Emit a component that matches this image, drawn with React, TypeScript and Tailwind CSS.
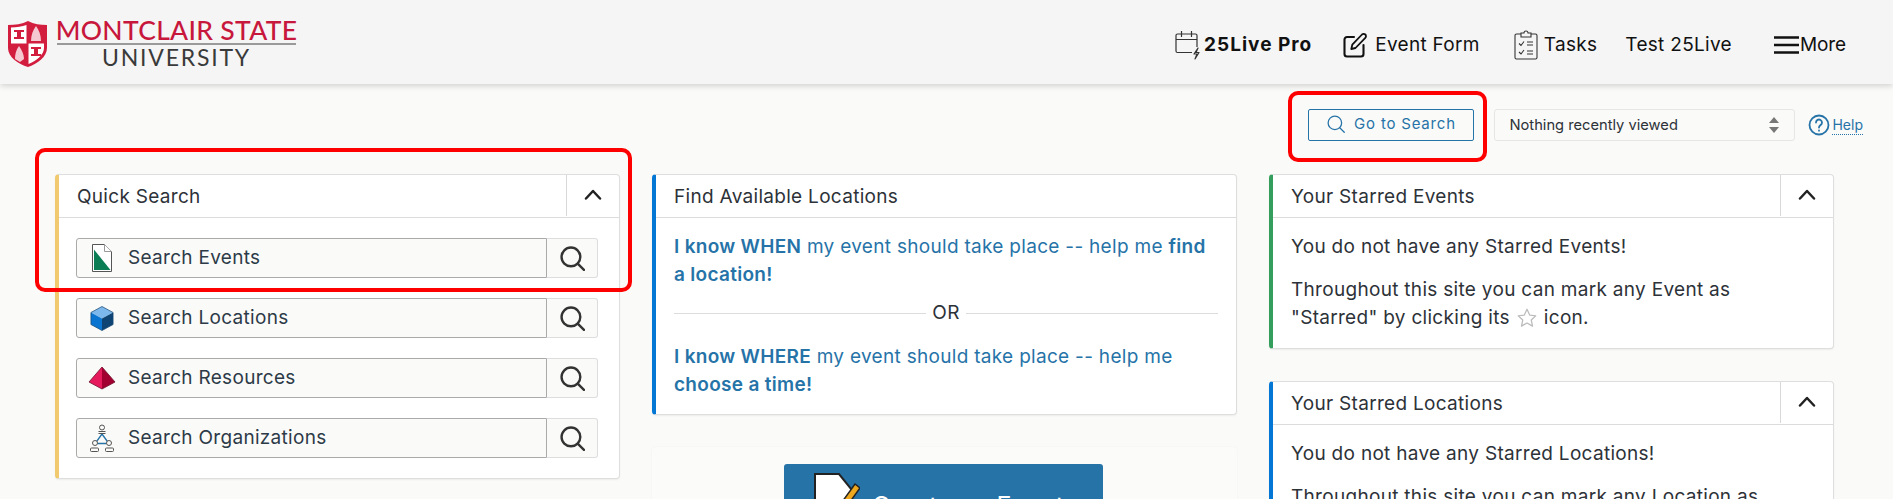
import React from "react";

const Mag = ({ size = 25, color = "#333", sw = 2.3 }: { size?: number; color?: string; sw?: number }) => (
  <svg width={size} height={size} viewBox="0 0 24 24" fill="none" stroke={color} strokeWidth={sw} strokeLinecap="round">
    <circle cx="10.5" cy="10.5" r="9" />
    <path d="M17 17l6 6" />
  </svg>
);

const Chevron = () => (
  <svg width="18" height="11" viewBox="0 0 18 11" fill="none" stroke="#222" strokeWidth="2.5" strokeLinecap="round" strokeLinejoin="round">
    <path d="M2 9.5 9 2l7 7.5" />
  </svg>
);

const EventIcon = () => (
  <svg width="20" height="28" viewBox="0 0 20 28">
    <path d="M.5.5h12l7 7v20H.5z" fill="#fff" stroke="#555" strokeWidth="1" />
    <path d="M12.500.5v7h7" fill="#fff" stroke="#999" strokeWidth="1" />
    <path d="M2 5.500 18.500 26H2z" fill="#0b7d55" />
  </svg>
);

const CubeIcon = () => (
  <svg width="24" height="27" viewBox="0 0 26 28">
    <path d="M13 1 25 7.500 13 14 1 7.500z" fill="#7db8ec" />
    <path d="M1 7.500 13 14v13L1 20.500z" fill="#0a75d0" />
    <path d="M25 7.500 13 14v13l12-6.500z" fill="#0d4474" />
    <path d="M13 1 25 7.500v13L13 27 1 20.500v-13z" fill="none" stroke="#1b4a75" strokeWidth="0.8" />
  </svg>
);

const DiamondIcon = () => (
  <svg width="28" height="24" viewBox="0 0 28 24">
    <path d="M14 1 1 16l13 7z" fill="#e51b5e" />
    <path d="M14 1l13 15-13 7z" fill="#a10030" />
    <path d="M14 1 27 16l-13 7L1 16z" fill="none" stroke="#6e0f2d" strokeWidth="0.8" />
  </svg>
);

const OrgIcon = () => (
  <svg width="26" height="29" viewBox="0 0 26 29" fill="none" stroke="#555" strokeWidth="1">
    <path d="M13 10 6.500 19M13 10l6.500 9M8.500 19.500h9" stroke="#2673a8" strokeWidth="1.300" />
    <circle cx="13" cy="3.500" r="2.500" />
    <path d="M9.500 7.500h7M9.500 9.500h7" />
    <circle cx="6" cy="19" r="2.500" fill="#fafaf8" />
    <rect x="1.500" y="24" width="8" height="3.500" rx="1" />
    <circle cx="20" cy="19" r="2.500" fill="#fafaf8" />
    <rect x="16.500" y="24" width="8" height="3.500" rx="1" />
  </svg>
);

const CalBolt = () => (
  <svg width="26" height="30" viewBox="0 0 26 30" fill="none" stroke="#333" strokeWidth="1.2" strokeLinejoin="round">
    <path d="M17 22.500H2.500a1.500 1.500 0 0 1-1.500-1.500V5.500A1.500 1.500 0 0 1 2.500 4h18A1.500 1.500 0 0 1 22 5.500V17" />
    <path d="M1 9.500h21M6.500 1v6M16.500 1v6" />
    <path d="M23 18l-4 6h3l-2 5 4-6.500h-3z" />
  </svg>
);

const EditIcon = () => (
  <svg width="24" height="26" viewBox="0 0 24 26" fill="none" stroke="#111" strokeWidth="2.100" strokeLinecap="round" strokeLinejoin="round">
    <path d="M11 5H4a2.500 2.500 0 0 0-2.500 2.500V22A2.500 2.500 0 0 0 4 24.500h14a2.500 2.500 0 0 0 2.500-2.500v-9" />
    <path d="M19 2.500a2.300 2.300 0 0 1 3.300 3.300L12.500 16l-4.200 1 1-4.300z" strokeWidth="1.800" />
  </svg>
);

const TasksIcon = () => (
  <svg width="24" height="30" viewBox="0 0 24 30" fill="none" stroke="#333" strokeWidth="1.1">
    <path d="M7 4H2.500A1.500 1.500 0 0 0 1 5.500v22A1.500 1.500 0 0 0 2.500 29h19a1.500 1.500 0 0 0 1.500-1.500v-22A1.500 1.500 0 0 0 21.500 4H17" />
    <path d="M7 3h3a2 2 0 0 1 4 0h3v4H7z" />
    <path d="M5 13.500l2 2 3-4M5 22l2 2 3-4M13 12h6M13 15h6M13 21h6M13 24h6" />
  </svg>
);

const StarIcon = () => (
  <svg width="20" height="20" viewBox="0 0 24 24" fill="none" stroke="#bbb" strokeWidth="1.500" strokeLinejoin="round" className="mx-[7px] inline-block align-[-4px]">
    <path d="m12 1.500 3.200 7 7.300.8-5.400 5 1.500 7.400L12 18l-6.600 3.700 1.500-7.400-5.400-5 7.300-.8z" />
  </svg>
);

function Panel({ accent, title, collapse = true, children }: { accent: string; title: string; collapse?: boolean; children: React.ReactNode }) {
  return (
    <section className={`rounded-[4px] border border-[#dedede] border-l-4 ${accent} bg-white shadow-[0_1px_2px_rgba(0,0,0,0.06)]`}>
      <header className="flex h-[43px] items-center justify-between border-b border-[#dcdcdc]">
        <h2 className="pl-[18px] pt-[2px] text-[19px] font-normal text-[#2d3238]">{title}</h2>
        {collapse && (
          <div className="flex h-[41px] w-[53px] items-center justify-center self-start border-l border-[#d8d8d8] pb-[2px]">
            <Chevron />
          </div>
        )}
      </header>
      {children}
    </section>
  );
}

function SearchRow({ icon, label }: { icon: React.ReactNode; label: string }) {
  return (
    <div className="flex h-10 w-[522px] rounded-[3px] text-[#2d3a48]">
      <div className="flex flex-1 items-center rounded-l-[3px] border border-[#aaa] bg-[#fafaf8]">
        <span className="mr-[2px] flex w-[49px] justify-center">{icon}</span>
        {label}
      </div>
      <div className="flex w-[51px] items-center justify-center rounded-r-[3px] border border-l-0 border-[#ddd] bg-[#fafaf8]">
        <Mag />
      </div>
    </div>
  );
}

export default function App() {
  return (
    <div className="relative h-[499px] overflow-hidden bg-[#fafaf8] font-['Inter',sans-serif] text-[19px] leading-[28px] tracking-[0.3px] text-[#2d3238]">
      <header className="flex h-[84px] items-center justify-between bg-[#f5f5f5] pl-[7px] pr-[47px] shadow-[0_2px_6px_rgba(0,0,0,0.16)]">
        <div className="flex items-center gap-[9px] pt-[3px]">
          <svg width="41" height="48" viewBox="0 0 41 48">
            <path d="M1 5c7 0 14-1 20-4 6 3 12 4 19 4v23c0 9-10 16-19 19C11 44 1 37 1 28z" fill="#d31d3f" />
            <path d="M4 7.500c6 0 11-1 15.500-2.500v18.500H4zM21.500 23.500H37V28c0 7-8 13-15.500 16z" fill="#fff" />
            <path d="M7 10h10v2H7zM10 12h4v5h-4zM7 17h10v2H7zM24 27h10v2H24zM27 29h4v5h-4zM24 34h10v2H24z" fill="#d31d3f" />
            <path d="M29 6c3 4 5 9 5 15h-10c0-6 2-11 5-15zM12 26c3 4 5 9 5 13l-4 3-5-3c0-5 1-9 4-13z" fill="#f4c9d1" />
          </svg>
          <div className="flex w-[239px] flex-col items-center font-['Lato',sans-serif] tracking-normal">
            <span className="whitespace-nowrap text-[26.5px] font-medium leading-[26px] tracking-[0.3px] text-[#c8173c]">MONTCLAIR STATE</span>
            <span className="h-[2px] w-full bg-[#9a9a9a]" />
            <span className="whitespace-nowrap text-[23px] font-normal leading-[25px] tracking-[1.8px] text-[#3a3a3a]">UNIVERSITY</span>
          </div>
        </div>
        <nav className="flex items-center pt-[5px] text-[#111]">
          <span className="flex items-center gap-[3px]">
            <CalBolt />
            <b className="font-bold tracking-[1px]">25Live Pro</b>
          </span>
          <span className="ml-[31px] flex items-center gap-[8px]">
            <EditIcon />
            Event Form
          </span>
          <span className="ml-[34px] flex items-center gap-[6px]">
            <TasksIcon />
            Tasks
          </span>
          <span className="ml-[28px]">Test 25Live</span>
          <span className="ml-[41px] flex items-center tracking-[-0.1px]">
            <svg width="27" height="20" viewBox="0 0 27 20" fill="none" stroke="#111" strokeWidth="2.500">
              <path d="M1 2.500h25M1 10h25M1 17.500h25" />
            </svg>
            More
          </span>
        </nav>
      </header>

      <div className="flex items-center justify-end pr-[30px] pt-[25px]">
        <button className="flex h-8 w-[166px] items-center justify-center gap-[9px] rounded-[2px] border border-[#2673a8] pb-[2px] text-[15px] tracking-[0.8px] text-[#2673a8]">
          <Mag size={18} color="#2673a8" sw={1.700} />
          Go to Search
        </button>
        <div className="ml-[20px] flex h-8 w-[301px] items-center justify-between rounded-[3px] border border-[#e6e6e6] bg-[#fafaf8] pl-[14px] pr-[15px] text-[14.7px] tracking-normal text-[#2d3238]">
          Nothing recently viewed
          <svg width="10" height="16" viewBox="0 0 10 16" fill="#777">
            <path d="M5 0l5 6H0zM5 16l5-6H0z" />
          </svg>
        </div>
        <span className="ml-[13px] flex items-center gap-[2px] text-[14px] tracking-normal text-[#2673a8]">
          <svg width="22" height="22" viewBox="0 0 22 22" fill="none" stroke="#2673a8" strokeWidth="1.800" strokeLinecap="round">
            <circle cx="11" cy="11" r="9.500" />
            <path d="M8 8.500a3 3 0 1 1 4.500 2.600c-1 .6-1.500 1.100-1.500 2.400" />
            <path d="M11 16.500v.2" />
          </svg>
          <span className="border-b border-dotted border-[#2673a8] leading-[18px]">Help</span>
        </span>
      </div>

      <main className="flex items-start gap-[32px] pl-[55px] pr-[58px] pt-[33px]">
        <div className="w-[565px]">
          <Panel accent="border-l-[#f1ca6f]" title="Quick Search">
            <div className="flex flex-col gap-5 pb-[20px] pl-[17px] pt-[20px]">
              <SearchRow icon={<EventIcon />} label="Search Events" />
              <SearchRow icon={<CubeIcon />} label="Search Locations" />
              <SearchRow icon={<DiamondIcon />} label="Search Resources" />
              <SearchRow icon={<OrgIcon />} label="Search Organizations" />
            </div>
          </Panel>
        </div>

        <div className="flex w-[585px] flex-col gap-[32px]">
          <Panel accent="border-l-[#0477d4]" title="Find Available Locations" collapse={false}>
            <div className="px-[18px] pb-[15px] pt-[15px]">
              <p className="text-[#2673a8]">
                <b className="font-semibold">I know WHEN</b> my event should take place -- help me <b className="font-semibold">find a location!</b>
              </p>
              <div className="my-[10px] flex items-center gap-[6px] text-[#2d3238]">
                <span className="h-px flex-1 bg-[#ddd]" />
                OR
                <span className="h-px flex-1 bg-[#ddd]" />
              </div>
              <p className="pt-[6px] text-[#2673a8]">
                <b className="font-semibold">I know WHERE</b> my event should take place -- help me <b className="font-semibold">choose a time!</b>
              </p>
            </div>
          </Panel>
          <div className="flex justify-center rounded-[4px] bg-[#fbfbfa] pr-[2px] pt-[17px] shadow-[0_0_2px_rgba(0,0,0,0.05)]">
            <button className="flex h-[90px] w-[319px] items-start gap-[12px] rounded-[3px] bg-[#2673a8] pl-[30px] pt-[9px] text-[25px] text-white">
              <svg width="46" height="50" viewBox="0 0 46 50">
                <path d="M1 1h24l13 16v32H1z" fill="#fff" stroke="#222" strokeWidth="2" />
                <path d="M23 36l18-25 5 4-18 25-6 2z" fill="#eda81d" stroke="#222" strokeWidth="1.500" />
              </svg>
              <span className="pt-[19px]">Create an Event</span>
            </button>
          </div>
        </div>

        <div className="flex w-[565px] flex-col gap-[32px]">
          <Panel accent="border-l-[#349e5c]" title="Your Starred Events">
            <div className="px-[18px] pb-[16px] pt-[15px]">
              <p>You do not have any Starred Events!</p>
              <p className="mt-[15px]">
                Throughout this site you can mark any Event as "Starred" by clicking its<StarIcon />icon.
              </p>
            </div>
          </Panel>
          <Panel accent="border-l-[#0477d4]" title="Your Starred Locations">
            <div className="px-[18px] pb-[16px] pt-[15px]">
              <p>You do not have any Starred Locations!</p>
              <p className="mt-[15px]">
                Throughout this site you can mark any Location as "Starred" by clicking its<StarIcon />icon.
              </p>
            </div>
          </Panel>
        </div>
      </main>

      <div className="pointer-events-none absolute left-[35px] top-[148px] h-[144px] w-[597px] rounded-[10px] border-4 border-[#ff0000]" />
      <div className="pointer-events-none absolute left-[1288px] top-[91px] h-[71px] w-[199px] rounded-[10px] border-4 border-[#ff0000]" />
    </div>
  );
}
